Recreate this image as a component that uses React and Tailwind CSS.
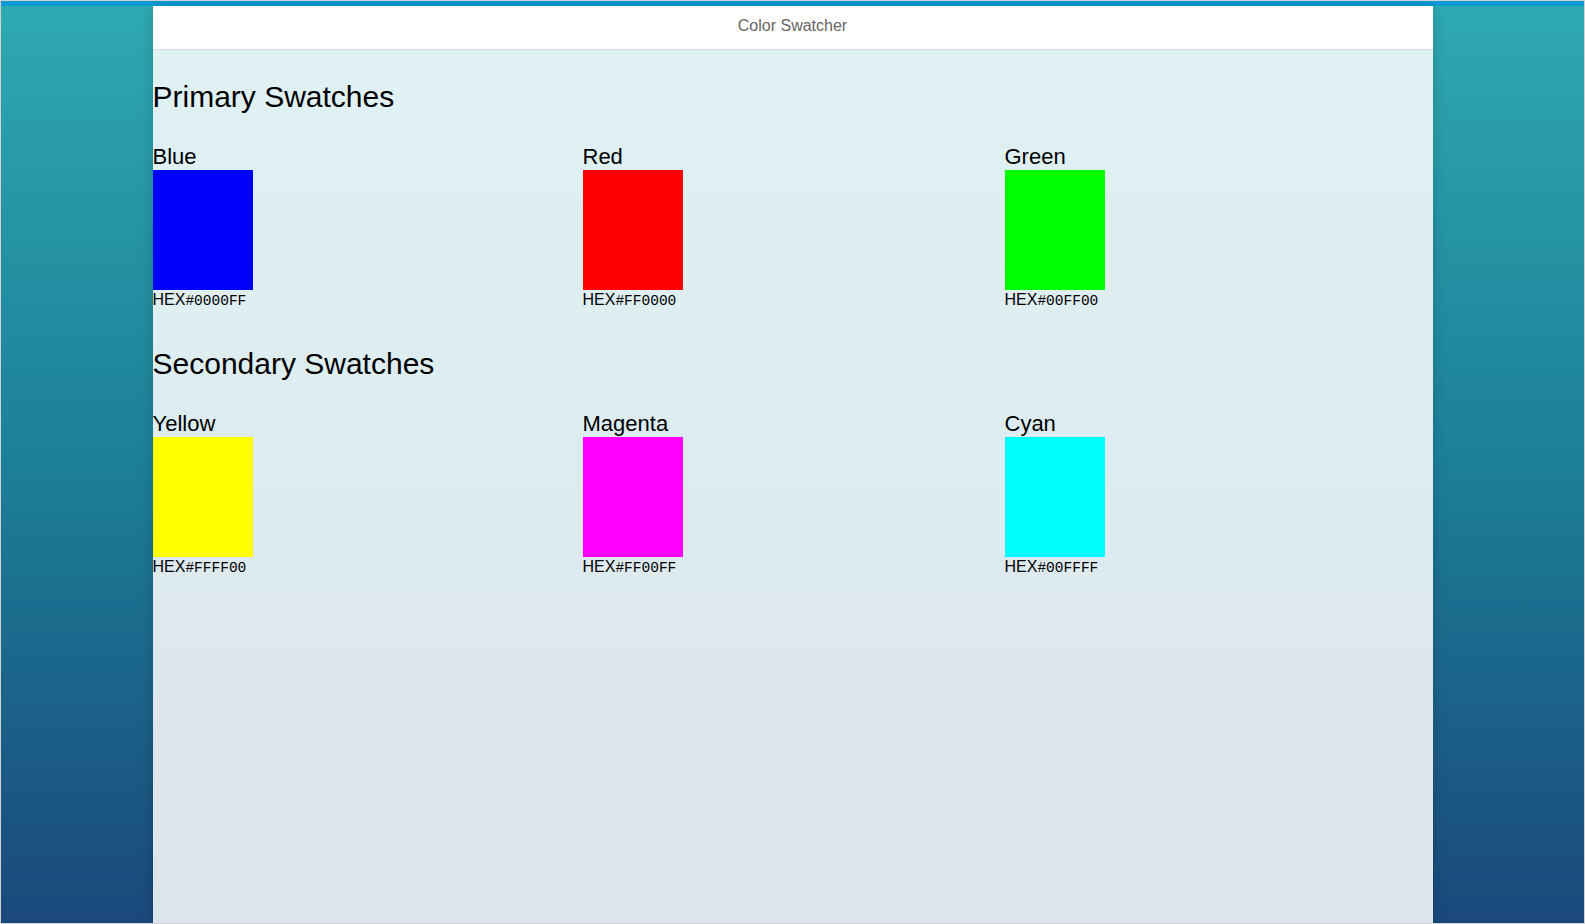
const primary = [
  { name: "Blue", hex: "#0000FF" },
  { name: "Red", hex: "#FF0000" },
  { name: "Green", hex: "#00FF00" },
];
const secondary = [
  { name: "Yellow", hex: "#FFFF00" },
  { name: "Magenta", hex: "#FF00FF" },
  { name: "Cyan", hex: "#00FFFF" },
];

function Swatch({ name, hex }) {
  return (
    <div className="flex flex-col items-start">
      <div className="text-[22px] leading-[26px] text-black">{name}</div>
      <div className="w-[100px] h-[120px]" style={{ backgroundColor: hex }} />
      <div className="pt-[1px] text-[16px] leading-[18px] text-black whitespace-nowrap">
        HEX
        <span className="font-['Liberation_Mono',monospace] text-[14.5px]">{hex}</span>
      </div>
    </div>
  );
}

function Row({ items }) {
  return (
    <div className="grid grid-cols-[430px_422px_1fr]">
      {items.map((s) => (
        <Swatch key={s.name} {...s} />
      ))}
    </div>
  );
}

export default function App() {
  return (
    <div className="h-[924px] w-full border border-[#d2d2d2] flex flex-col overflow-hidden font-['Liberation_Sans',Arial,sans-serif]">
      <div className="h-[5px] bg-[#0d9bd8] shrink-0" />
      <div className="flex-1 flex justify-center bg-gradient-to-b from-[#2ea9b1] via-[#1c7f98] to-[#1a487a]">
        <div className="w-[1280px] flex flex-col bg-white/85 shadow-[0_0_12px_rgba(0,0,0,0.18)]">
          <div className="h-[44px] bg-white border-b border-[#dcdcdc] pt-[11px] text-center text-[16px] leading-[18px] text-[#666666] shrink-0">
            Color Swatcher
          </div>
          <div className="flex flex-col">
            <h2 className="mt-[29px] text-[30px] leading-[36px] text-black">Primary Swatches</h2>
            <div className="mt-[29px]">
              <Row items={primary} />
            </div>
            <h2 className="mt-[36px] text-[30px] leading-[36px] text-black">Secondary Swatches</h2>
            <div className="mt-[29px]">
              <Row items={secondary} />
            </div>
          </div>
        </div>
      </div>
    </div>
  );
}
